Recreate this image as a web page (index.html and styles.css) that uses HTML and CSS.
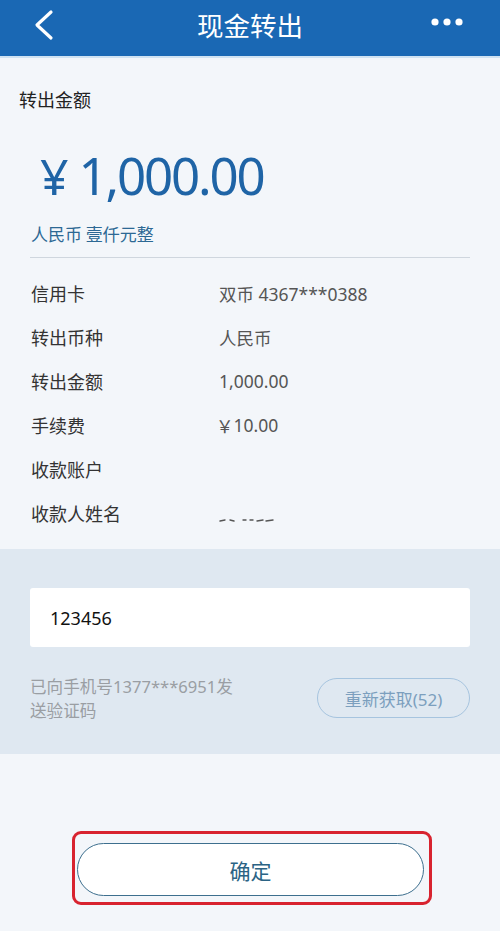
FILE: index.html
```html
<!DOCTYPE html>
<html lang="zh-CN">
<head>
<meta charset="utf-8">
<link rel="stylesheet" href="styles.css">
</head>
<body>
<header class="topbar">
  <svg class="back" width="24" height="32" viewBox="0 0 24 32"><path d="M19 3 L5 16 L19 29" fill="none" stroke="#fff" stroke-width="3.2" stroke-linecap="round" stroke-linejoin="round"/></svg>
  <div class="title">现金转出</div>
  <svg class="more" width="34" height="10" viewBox="0 0 34 10"><circle cx="5" cy="5" r="3.6" fill="#fff"/><circle cx="17" cy="5" r="3.6" fill="#fff"/><circle cx="29" cy="5" r="3.6" fill="#fff"/></svg>
</header>
<main>
  <div class="label-top">转出金额</div>
  <div class="amount">¥<span class="amount-num">1,000.00</span></div>
  <div class="cn-amount">人民币 壹仟元整</div>
  <div class="divider"></div>
  <div class="rows">
    <div class="row"><span class="k">信用卡</span><span class="v">双币 4367***0388</span></div>
    <div class="row"><span class="k">转出币种</span><span class="v">人民币</span></div>
    <div class="row"><span class="k">转出金额</span><span class="v">1,000.00</span></div>
    <div class="row"><span class="k">手续费</span><span class="v"><span class="yen">￥</span>10.00</span></div>
    <div class="row"><span class="k">收款账户</span><span class="v"></span></div>
    <div class="row"><span class="k">收款人姓名</span><span class="v"><svg class="smudge" width="56" height="6" viewBox="0 0 56 6"><g stroke="#555" stroke-width="1.4" stroke-linecap="round"><path d="M1 4 L6 3"/><path d="M11 3 L15 4"/><path d="M24 3 L27 3"/><path d="M31 3 L34 3"/><path d="M38 4 L44 3"/><path d="M47 4 L54 3"/></g></svg></span></div>
  </div>
  <section class="verify">
    <div class="input">123456</div>
    <div class="verify-foot">
      <div class="hint">已向手机号1377***6951发<br>送验证码</div>
      <div class="resend">重新获取(52)</div>
    </div>
  </section>
  <div class="confirm-wrap">
    <div class="highlight">
      <div class="confirm">确定</div>
    </div>
  </div>
</main>
</body>
</html>
```
FILE: styles.css
```css
* { box-sizing: border-box; }
html, body { margin: 0; padding: 0; }
body {
  width: 500px;
  height: 931px;
  overflow: hidden;
  background: #f3f6fa;
  font-family: "Noto Sans", "Noto Sans CJK SC", sans-serif;
}
.topbar {
  height: 58px;
  background: #1a68b4;
  border-bottom: 2px solid #cfe2f2;
  display: flex;
  align-items: center;
  justify-content: space-between;
  padding: 0 36px 0 32px;
  position: relative;
}
.back { display: block; margin-top: -6px; }
.title {
  position: absolute;
  left: 0; right: 0; top: 0;
  text-align: center;
  color: #fff;
  font-family: "Noto Sans CJK SC", sans-serif;
  font-size: 26.5px;
  line-height: 49px;
  pointer-events: none;
}
.more { display: block; margin-top: -12px; }
main { display: flex; flex-direction: column; }
.label-top {
  margin: 29px 0 0 19px;
  font-family: "Noto Sans CJK SC", sans-serif;
  font-size: 18px;
  line-height: 24px;
  color: #222;
}
.amount {
  margin: 34px 0 0 40px;
  color: #1f64a6;
  font-size: 50px;
  line-height: 60px;
  display: flex;
  align-items: baseline;
}
.amount-num { margin-left: 10px; font-size: 51px; letter-spacing: -2.2px; }
.cn-amount {
  margin: 16px 0 0 31px;
  font-family: "Noto Sans CJK SC", sans-serif;
  font-size: 17px;
  line-height: 24px;
  color: #2c6894;
}
.divider {
  margin: 11px 30px 0 30px;
  height: 1px;
  background: #cfd6de;
}
.rows { padding: 13px 0 0 31px; }
.row {
  height: 44px;
  display: flex;
  align-items: center;
}
.k {
  width: 188px;
  font-family: "Noto Sans CJK SC", sans-serif;
  font-size: 18px;
  color: #333;
}
.v {
  font-size: 17.5px;
  color: #555;
  font-family: "Noto Sans", "Noto Sans CJK SC", sans-serif;
  display: flex;
  align-items: center;
}
.yen { font-family: "Noto Sans CJK SC", sans-serif; margin-left: -3px; }
.smudge { display: block; margin-top: 14px; }
.verify {
  margin-top: 14px;
  background: #dfe8f1;
  padding: 39px 30px 31px 30px;
}
.input {
  height: 59px;
  background: #fff;
  border-radius: 3px;
  padding-left: 20px;
  display: flex;
  align-items: center;
  font-size: 18px;
  color: #111;
}
.verify-foot {
  margin-top: 31px;
  display: flex;
  justify-content: space-between;
  align-items: flex-start;
}
.hint {
  font-family: "Noto Sans", "Noto Sans CJK SC", sans-serif;
  font-size: 16.6px;
  line-height: 24px;
  color: #9a9ea3;
  margin-top: -3px;
}
.resend {
  width: 153px;
  height: 40px;
  border: 1.5px solid #a6c4df;
  border-radius: 20px;
  display: flex;
  align-items: center;
  justify-content: center;
  font-size: 17px;
  color: #7c9fbe;
}
.confirm-wrap {
  margin-top: 77px;
  padding-left: 72px;
}
.highlight {
  width: 360px;
  height: 74px;
  border: 3px solid #d8232f;
  border-radius: 9px;
  padding: 9px 6px 0 2px;
}
.confirm {
  width: 347px;
  height: 53px;
  border: 1.5px solid #3d6f8e;
  border-radius: 27px;
  background: #fff;
  display: flex;
  align-items: center;
  justify-content: center;
  font-family: "Noto Sans CJK SC", sans-serif;
  font-size: 21px;
  color: #2b6384;
}
```
